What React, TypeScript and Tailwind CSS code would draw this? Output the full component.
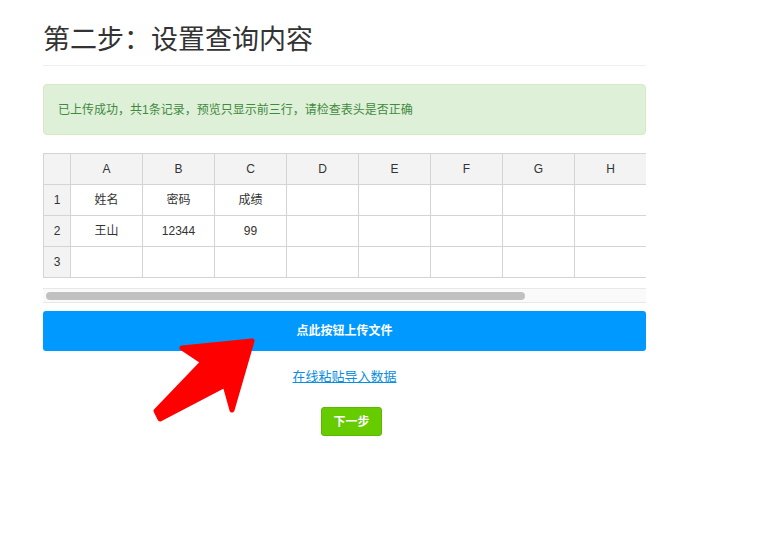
const font = { fontFamily: '"Liberation Sans", "Noto Sans CJK SC", sans-serif' };

const cols = ['A', 'B', 'C', 'D', 'E', 'F', 'G', 'H'];
const rows: string[][] = [
  ['姓名', '密码', '成绩'],
  ['王山', '12344', '99'],
  [],
];

function Arrow() {
  // 红色箭头，压在上传按钮上
  return (
    <svg
      className="absolute left-0 top-0 pointer-events-none"
      width="763"
      height="540"
      viewBox="0 0 763 540"
    >
      <path
        d="M252 341 L182 348 L203 362 L156 411 L160 419 L225 385 L232 410 Z"
        fill="#ff0000"
        stroke="#ff0000"
        strokeWidth="5"
        strokeLinejoin="round"
      />
    </svg>
  );
}

export default function App() {
  return (
    <div className="relative w-[763px] h-[540px] bg-white text-[#333]" style={font}>
      <div className="w-[603px] ml-[43px] pt-[22px]">
        <h1 className="text-[27px] leading-[36px] font-normal pb-[7px] border-b border-[#eee]">
          第二步：设置查询内容
        </h1>

        {/* 提示 */}
        <div className="mt-[18px] h-[51px] flex items-center px-[14px] rounded bg-[#dff0d8] border border-[#d6e9c6] text-[#3f8a3f] text-[12px]">
          已上传成功，共1条记录，预览只显示前三行，请检查表头是否正确
        </div>

        {/* 表格预览 */}
        <div className="mt-[18px] overflow-hidden">
          <table className="border-collapse text-[12px] text-[#333] table-fixed">
            <thead>
              <tr className="h-[31px] bg-[#f3f3f3]">
                <th className="w-[27px] min-w-[27px] border border-[#d4d4d4] font-normal" />
                {cols.map((c) => (
                  <th key={c} className="w-[72px] min-w-[72px] border border-[#d4d4d4] font-normal">
                    {c}
                  </th>
                ))}
                <th className="w-[144px] min-w-[144px] border border-[#d4d4d4]" />
              </tr>
            </thead>
            <tbody>
              {rows.map((r, i) => (
                <tr key={i} className="h-[31px]">
                  <td className="bg-[#f3f3f3] border border-[#d4d4d4] text-center">{i + 1}</td>
                  {cols.map((c, j) => (
                    <td key={c} className="border border-[#d4d4d4] text-center">
                      {r[j] ?? ''}
                    </td>
                  ))}
                  <td className="border border-[#d4d4d4]" />
                </tr>
              ))}
            </tbody>
          </table>
        </div>

        {/* 滚动条 */}
        <div className="mt-[10px] h-[15px] bg-[#fafafa] border-y border-[#e8e8e8] flex items-center px-[3px]">
          <div className="w-[479px] h-[8px] rounded-full bg-[#c1c1c1]" />
        </div>

        <button className="mt-[8px] w-full h-[40px] rounded-[3px] bg-[#0099ff] text-white text-[12px] font-bold">
          点此按钮上传文件
        </button>

        <div className="mt-[13px] text-center">
          <a href="#" className="text-[13px] text-[#0a8ee0] underline">
            在线粘贴导入数据
          </a>
        </div>

        <div className="mt-[19px] flex justify-center pl-[14px]">
          <button className="w-[61px] h-[29px] rounded-[3px] bg-[#66cc00] border border-[#5cb800] text-white text-[12px] font-bold">
            下一步
          </button>
        </div>
      </div>
      <Arrow />
    </div>
  );
}
